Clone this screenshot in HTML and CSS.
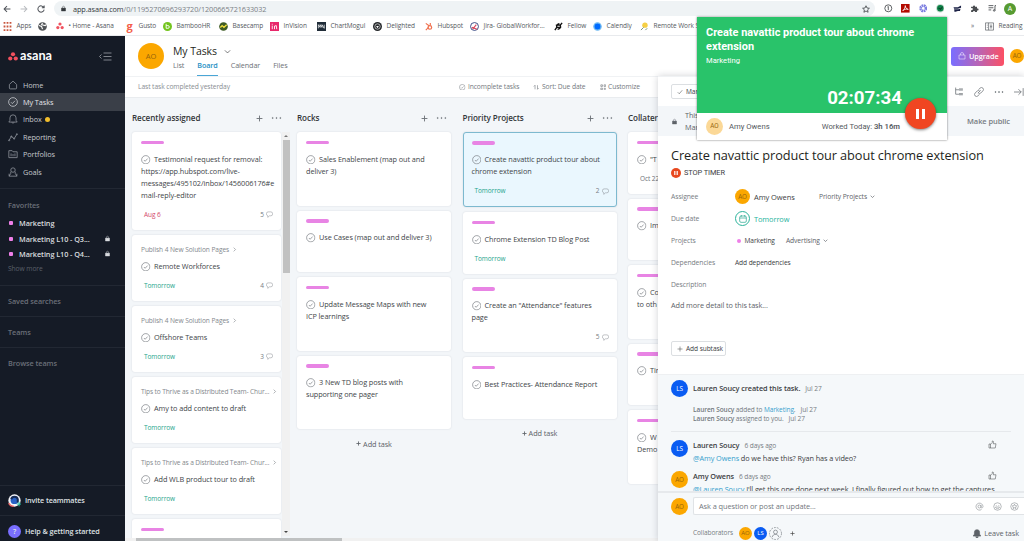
FILE: index.html
```html
<!DOCTYPE html>
<html lang="en">
<head>
    <meta charset="UTF-8">
    <meta name="viewport" content="width=device-width, initial-scale=1.0">
    <title>My Tasks - Asana</title>
    <link rel="stylesheet" href="styles.css">
</head>
<body>
    <!-- shared icons -->
    <svg class="sprite">
        <symbol id="check" viewBox="0 0 20 20"><circle cx="10" cy="10" r="8.7"/><path d="M6 10.5l2.7 2.7L14 7.5"/></symbol>
        <symbol id="comment" viewBox="0 0 16 16"><path d="M5 2h6a4 4 0 0 1 4 4v1a4 4 0 0 1-4 4H8l-4 3.500v-3.700A4 4 0 0 1 1 7V6a4 4 0 0 1 4-4z"/></symbol>
        <symbol id="down" viewBox="0 0 12 12"><path d="M1.500 4L6 8.500 10.500 4"/></symbol>
        <symbol id="right" viewBox="0 0 12 12"><path d="M4 1.500L8.500 6 4 10.500"/></symbol>
        <symbol id="plus" viewBox="0 0 12 12"><path d="M6 1v10M1 6h10"/></symbol>
        <symbol id="dots" viewBox="0 0 20 6"><circle cx="3" cy="3" r="1"/><circle cx="10" cy="3" r="1"/><circle cx="17" cy="3" r="1"/></symbol>
        <symbol id="lock" viewBox="0 0 12 14"><path d="M1 6h10v7H1z" fill="currentColor"/><path d="M3.500 6V4a2.500 2.500 0 0 1 5 0v2"/></symbol>
        <symbol id="thumb" viewBox="0 0 18 18"><path d="M2 8h3v8H2zM5 8.500L8.500 5V2c2-.5 3 1 2.500 3l-.5 2.500H16L14.500 16H5"/></symbol>
    </svg>

    <div class="browser">
        <div class="address-row">
            <svg class="nav" viewBox="0 0 14 14"><path d="M13 7H2M7 2L2 7l5 5"/></svg>
            <svg class="nav faded" viewBox="0 0 14 14"><path d="M1 7h11M7 2l5 5-5 5"/></svg>
            <svg class="nav" viewBox="0 0 14 14"><path d="M12 4.500A5.500 5.500 0 1 0 12.500 8M12.500 1v4h-4"/></svg>
            <div class="address">
                <svg class="lock-icon"><use href="#lock"/></svg>
                <span>app.asana.com<span class="path">/0/1195270696293720/1200665721633032</span></span>
                <svg class="star" viewBox="0 0 16 16"><path d="M8 1.500l2 4.500 4.800.5-3.600 3.200 1 4.800L8 12l-4.200 2.500 1-4.800L1.200 6.500 6 6z"/></svg>
            </div>
            <div class="extensions">
                <svg viewBox="0 0 16 16"><circle cx="8" cy="8" r="6.500"/><path d="M8 4.500v7M6.500 5.500L8 4.500"/></svg>
                <svg viewBox="0 0 16 16"><path d="M0 0h16v16H0z" fill="#b30b00" stroke="none"/><path d="M3 13c4-4 5-7 5-10 0 4 2 6 5.500 7-4-1-7 0-10 2" stroke="#fff"/></svg>
                <svg viewBox="0 0 16 16"><circle cx="8" cy="8" r="5" stroke="#7d7fe0" stroke-width="5" stroke-dasharray="3 1"/></svg>
                <svg viewBox="0 0 16 16"><circle cx="8" cy="8" r="8" fill="#c9dcd1" stroke="none"/><circle cx="8" cy="8" r="6" fill="#0b8046" stroke="none"/><path d="M4.500 7l3 3 4.500-4" stroke="#111"/></svg>
                <svg viewBox="0 0 16 16"><path d="M1 6h8l6-3v4L9 9H2zM2 10h8l4-1-1 4H9l-6 2z" fill="#1d2347" stroke="none"/></svg>
                <svg viewBox="0 0 16 16"><path d="M2 5h3.500a2 2 0 1 1 4 0H13v3.500a2 2 0 1 1 0 3.500v3H9.500a2 2 0 1 0-4 0H2v-4a2 2 0 1 0 0-3z" fill="#4a4d50" stroke="none"/></svg>
                <svg viewBox="0 0 16 16"><path d="M1 3h9M1 7h9M1 11h5M13 12V3h3"/><circle cx="11.500" cy="12" r="1.500"/></svg>
                <span class="profile">A</span>
            </div>
        </div>
        <div class="bookmarks">
            <span class="bm"><svg viewBox="0 0 9 9"><path d="M1.500 0v9M4.500 0v9M7.500 0v9" stroke="#c8553d" stroke-width="1.800" stroke-dasharray="1.800 1.800"/></svg>Apps</span>
            <span class="bm"><svg viewBox="0 0 10 10"><circle cx="5" cy="5" r="4.800" fill="#505357"/><path d="M1 4l3 1 1 3M5 1l-1 2 4 1 1-1" stroke="#fff" stroke-width="1.200" fill="none"/></svg></span>
            <span class="bm"><svg class="asana-bm" viewBox="0 0 10 10"><circle cx="5" cy="2.500" r="2"/><circle cx="2.300" cy="7" r="2"/><circle cx="7.700" cy="7" r="2"/></svg>• Home - Asana</span>
            <span class="bm"><b class="gusto">g</b>Gusto</span>
            <span class="bm"><svg viewBox="0 0 10 10"><circle cx="5" cy="5" r="5" fill="#73c41d"/><path d="M3.500 2v5h2a1.300 1.300 0 0 0 0-3h-2" stroke="#fff"/></svg>BambooHR</span>
            <span class="bm"><svg viewBox="0 0 10 10"><circle cx="5" cy="5" r="4.800" fill="#3e5b25"/><path d="M1.500 6l2-2 2 2 3-3" stroke="#f5e23d" stroke-width="1.500"/></svg>Basecamp</span>
            <span class="bm"><svg viewBox="0 0 10 10"><path d="M0 0h10v10H0z" fill="#e8286b"/><path d="M2.500 4v4M5 8V4.500l2-.5.500 4M2.500 2v1" stroke="#fff"/></svg>InVision</span>
            <span class="bm"><svg viewBox="0 0 10 10"><path d="M0 0h10v10H0z" fill="#202c38"/><path d="M1.500 7V3l2 3V3l2 3V3L8 7V3" stroke="#fff" stroke-width=".8"/></svg>ChartMogul</span>
            <span class="bm"><svg viewBox="0 0 10 10"><circle cx="5" cy="5" r="5" fill="#26282b"/><circle cx="5" cy="5" r="3" stroke="#ddd" stroke-width=".8"/><path d="M3.500 4.500h3L5 7z" fill="#fff"/></svg>Delighted</span>
            <span class="bm"><svg viewBox="0 0 10 10"><path d="M2 1.500l4 3M7 1v3M2 9l3-3" stroke="#f0714f" stroke-width="1.300"/><circle cx="6.500" cy="6" r="2" stroke="#f0714f" stroke-width="1.400"/></svg>Hubspot</span>
            <span class="bm"><svg viewBox="0 0 10 10"><circle cx="5" cy="5" r="4.400" stroke="#2d407d"/><path d="M3 8l4-5M2 6l6 2" stroke="#d8495d" stroke-width="1.300"/></svg>Jira- GlobalWorkfor...</span>
            <span class="bm"><svg viewBox="0 0 10 10"><path d="M2 3.500h5L9 1M8 6H3L1 9M7 3.500C8 6 6 8 4 8M3 6c-.5-3 2-4 3-4" stroke="#111" stroke-width="1.600"/></svg>Fellow</span>
            <span class="bm"><svg viewBox="0 0 10 10"><circle cx="5" cy="5" r="4" fill="#006bff" stroke="#6fb9f2" stroke-width="1.500"/></svg>Calendly</span>
            <span class="bm"><svg viewBox="0 0 10 10"><circle cx="5.500" cy="3.500" r="3" fill="#f5cf45"/><path d="M1 9l3-3M6 9l2-2" stroke="#6a8a70"/></svg>Remote Work S</span>
            <span class="bm more">»</span>
            <span class="bm"><svg viewBox="0 0 10 10"><path d="M.500 1h9v8h-9zM4 1v8M5.500 3.500H8M5.500 5H8M5.500 6.500H8M2 3.500h1M2 6h1" stroke="#5f6368" stroke-width=".8"/></svg>Reading list</span>
        </div>
    </div>

    <div class="app">
        <div class="sidebar">
            <div class="brand">
                <svg class="asana-dots" viewBox="0 0 20 18"><circle cx="10" cy="4.500" r="4.200"/><circle cx="4.500" cy="13" r="4.200"/><circle cx="15.500" cy="13" r="4.200"/></svg>
                <span class="wordmark">asana</span>
                <svg class="collapse" viewBox="0 0 26 18"><path d="M9 2h16M9 9h16M9 16h16M5 5L1 9l4 4"/></svg>
            </div>
            <div class="nav-item"><svg viewBox="0 0 18 18"><path d="M2.500 8L9 2l6.500 6v6.500a1.500 1.500 0 0 1-1.500 1.500H4a1.500 1.500 0 0 1-1.500-1.500z"/></svg>Home</div>
            <div class="nav-item active"><svg><use href="#check"/></svg>My Tasks</div>
            <div class="nav-item"><svg viewBox="0 0 18 18"><path d="M1.500 14.500l2-3V7a5.500 5.500 0 0 1 11 0v4.500l2 3zM7 15c.5 2 3.500 2 4 0"/></svg>Inbox<i class="unread"></i></div>
            <div class="nav-item"><svg viewBox="0 0 18 18"><path d="M2 15l4-7 5 4 5-8"/><circle cx="2" cy="15" r="1"/><circle cx="6" cy="8" r="1"/><circle cx="11" cy="12" r="1"/><circle cx="16" cy="4" r="1"/></svg>Reporting</div>
            <div class="nav-item"><svg viewBox="0 0 18 18"><path d="M1.500 3h6l1.500 2h7.500v10.500h-15zM5.500 8v5M9 9v4M12.500 8v5"/></svg>Portfolios</div>
            <div class="nav-item"><svg viewBox="0 0 18 18"><circle cx="9" cy="5.500" r="4"/><path d="M5 8.500v3L2 16.500h14l-3-5v-3M2 12v4.500M16 12v4.500"/></svg>Goals</div>

            <div class="favorites">
                <h4>Favorites</h4>
                <div class="fav"><i></i>Marketing</div>
                <div class="fav"><i></i>Marketing L10 - Q3...<svg><use href="#lock"/></svg></div>
                <div class="fav"><i></i>Marketing L10 - Q4...<svg><use href="#lock"/></svg></div>
                <div class="show-more">Show more</div>
            </div>
            <h4 class="section">Saved searches</h4>
            <h4 class="section">Teams</h4>
            <h4 class="section">Browse teams</h4>

            <div class="sidebar-foot">
                <div class="foot-item"><svg viewBox="0 0 20 20"><circle cx="10" cy="10" r="9.500" fill="#f4f4f8"/><circle cx="10" cy="9.500" r="6" fill="#2861c4"/><path d="M5 8c1-5 9-5 10 0v5" stroke="#172b55" stroke-width="3" fill="none"/><path d="M1 14a9 9 0 0 0 8 5" stroke="#f06a6a" stroke-width="2" fill="none"/><path d="M17 12v7M13.500 15.500h7" stroke="#25c2a0" stroke-width="1.500"/></svg>Invite teammates</div>
                <div class="foot-item"><span class="help">?</span>Help &amp; getting started</div>
            </div>
        </div>

        <div class="main">
            <div class="header">
                <span class="avatar big">AO</span>
                <div class="titles">
                    <h1>My Tasks <svg><use href="#down"/></svg></h1>
                    <div class="tabs">
                        <span>List</span>
                        <span class="current">Board</span>
                        <span>Calendar</span>
                        <span>Files</span>
                    </div>
                </div>
                <div class="upgrade"><svg viewBox="0 0 16 16"><path d="M2 6h12v8H2zM5 6V4a3 3 0 0 1 6 0v2"/></svg>Upgrade</div>
                <span class="avatar me">AO</span>
            </div>

            <div class="content">
                <div class="board-area">
                    <div class="toolbar">
                        <span class="last">Last task completed yesterday</span>
                        <span class="tool"><svg><use href="#check"/></svg>Incomplete tasks</span>
                        <span class="tool"><svg viewBox="0 0 16 16"><path d="M5 13V3L2 6M11 3v10l3-3"/></svg>Sort: Due date</span>
                        <span class="tool"><svg viewBox="0 0 16 16"><path d="M2 2h4v4H2zM10 2h4v4h-4zM2 10h4v4H2zM12 9v6M9 12h6"/></svg>Customize</span>
                    </div>
                    <div class="board">
                        <div class="column scrolls">
                            <div class="col-head"><h3>Recently assigned</h3><svg class="plus"><use href="#plus"/></svg><svg class="dots"><use href="#dots"/></svg></div>
                            <div class="col-body">
                                <div class="cards">
                                    <div class="card">
                                        <i class="tag"></i>
                                        <p><svg><use href="#check"/></svg>Testimonial request for removal:<br>https://app.hubspot.com/live-<br>messages/495102/inbox/1456006176#e<br>mail-reply-editor</p>
                                        <div class="meta"><span class="late">Aug 6</span><span class="count">5<svg><use href="#comment"/></svg></span></div>
                                    </div>
                                    <div class="card">
                                        <div class="parent">Publish 4 New Solution Pages<svg><use href="#right"/></svg></div>
                                        <p><svg><use href="#check"/></svg>Remote Workforces</p>
                                        <div class="meta"><span>Tomorrow</span><span class="count">4<svg><use href="#comment"/></svg></span></div>
                                    </div>
                                    <div class="card">
                                        <div class="parent">Publish 4 New Solution Pages<svg><use href="#right"/></svg></div>
                                        <p><svg><use href="#check"/></svg>Offshore Teams</p>
                                        <div class="meta"><span>Tomorrow</span><span class="count">3<svg><use href="#comment"/></svg></span></div>
                                    </div>
                                    <div class="card">
                                        <div class="parent full">Tips to Thrive as a Distributed Team- Chur...<svg><use href="#right"/></svg></div>
                                        <p><svg><use href="#check"/></svg>Amy to add content to draft</p>
                                        <div class="meta"><span>Tomorrow</span></div>
                                    </div>
                                    <div class="card">
                                        <div class="parent full">Tips to Thrive as a Distributed Team- Chur...<svg><use href="#right"/></svg></div>
                                        <p><svg><use href="#check"/></svg>Add WLB product tour to draft</p>
                                        <div class="meta"><span>Tomorrow</span></div>
                                    </div>
                                    <div class="card last-card"><i class="tag"></i></div>
                                </div>
                                <div class="scrollbar"><b class="up"></b><div class="thumb"></div><b class="dn"></b></div>
                            </div>
                        </div>

                        <div class="column">
                            <div class="col-head"><h3>Rocks</h3><svg class="plus"><use href="#plus"/></svg><svg class="dots"><use href="#dots"/></svg></div>
                            <div class="cards">
                                <div class="card"><i class="tag"></i><p><svg><use href="#check"/></svg>Sales Enablement (map out and<br>deliver 3)</p><div class="meta"></div></div>
                                <div class="card"><i class="tag"></i><p><svg><use href="#check"/></svg>Use Cases (map out and deliver 3)</p><div class="meta"></div></div>
                                <div class="card"><i class="tag"></i><p><svg><use href="#check"/></svg>Update Message Maps with new<br>ICP learnings</p><div class="meta"></div></div>
                                <div class="card"><i class="tag"></i><p><svg><use href="#check"/></svg>3 New TD blog posts with<br>supporting one pager</p><div class="meta"></div></div>
                            </div>
                            <div class="add-task"><svg><use href="#plus"/></svg>Add task</div>
                        </div>

                        <div class="column">
                            <div class="col-head"><h3>Priority Projects</h3><svg class="plus"><use href="#plus"/></svg><svg class="dots"><use href="#dots"/></svg></div>
                            <div class="cards">
                                <div class="card selected"><i class="tag"></i><p><svg><use href="#check"/></svg>Create navattic product tour about<br>chrome extension</p><div class="meta"><span>Tomorrow</span><span class="count">2<svg><use href="#comment"/></svg></span></div></div>
                                <div class="card"><i class="tag"></i><p><svg><use href="#check"/></svg>Chrome Extension TD Blog Post</p><div class="meta"><span>Tomorrow</span></div></div>
                                <div class="card"><i class="tag"></i><p><svg><use href="#check"/></svg>Create an "Attendance" features<br>page</p><div class="meta"><span class="count">5<svg><use href="#comment"/></svg></span></div></div>
                                <div class="card"><i class="tag"></i><p><svg><use href="#check"/></svg>Best Practices- Attendance Report</p><div class="meta"></div></div>
                            </div>
                            <div class="add-task"><svg><use href="#plus"/></svg>Add task</div>
                        </div>

                        <div class="column">
                            <div class="col-head"><h3>Collateral</h3></div>
                            <div class="cards">
                                <div class="card"><i class="tag"></i><p><svg><use href="#check"/></svg>"T</p><div class="meta"><span class="plain">Oct 22</span></div></div>
                                <div class="card"><i class="tag"></i><p><svg><use href="#check"/></svg>Im</p><div class="meta"></div></div>
                                <div class="card"><i class="tag"></i><p><svg><use href="#check"/></svg>Co<br>to oth</p><div class="meta"></div></div>
                                <div class="card"><i class="tag"></i><p><svg><use href="#check"/></svg>Tir</p><div class="meta"></div></div>
                                <div class="card"><i class="tag"></i><p><svg><use href="#check"/></svg>W<br>Demo</p><div class="meta"></div></div>
                            </div>
                        </div>
                    </div>
                    <div class="hscroll"><div></div></div>
                </div>

                <div class="pane">
                    <div class="pane-bar">
                        <span class="mark"><svg viewBox="0 0 12 12"><path d="M1.500 6.500l3 3 6-7"/></svg>Mark complete</span>
                        <span class="pane-icons">
                            <svg viewBox="0 0 18 18"><path d="M3 1v12h6M3 5h6M9 3.500h7M9 5.500h7M9 12h7M9 14h7"/></svg>
                            <svg viewBox="0 0 18 18"><path d="M7 11l5-5M8 5l3-3a3.500 3.500 0 0 1 5 5l-4 4a3 3 0 0 1-4 0M10 13l-3 3a3.500 3.500 0 0 1-5-5l4-4a3 3 0 0 1 4 0"/></svg>
                            <svg class="fat" viewBox="0 0 20 6"><use href="#dots"/></svg>
                            <svg viewBox="0 0 18 18"><path d="M0 9h13M8 4l5 5-5 5M16.500 2v14"/></svg>
                        </span>
                    </div>
                    <div class="privacy">
                        <svg><use href="#lock"/></svg>
                        <p>This task<br>Mark</p>
                        <b>Make public</b>
                    </div>
                    <div class="details">
                        <h2>Create navattic product tour about chrome extension</h2>
                        <div class="stop"><svg viewBox="0 0 10 10"><circle cx="5" cy="5" r="5" fill="#e8491f"/><path d="M3.800 3v4M6.200 3v4" stroke="#fff" stroke-width="1.200"/></svg>STOP TIMER</div>
                        <div class="field"><label>Assignee</label><span class="avatar small">AO</span><span class="person">Amy Owens</span><span class="drop">Priority Projects<svg><use href="#down"/></svg></span></div>
                        <div class="field"><label>Due date</label><span class="cal"><svg viewBox="0 0 12 12"><rect x="1" y="1.500" width="10" height="9.500" rx="2"/><path d="M1 4.500h10M3.500 0v2.500M8.500 0v2.500"/></svg></span><span class="due">Tomorrow</span></div>
                        <div class="field"><label>Projects</label><i class="pink"></i><span class="proj">Marketing</span><span class="drop2">Advertising<svg><use href="#down"/></svg></span></div>
                        <div class="field"><label>Dependencies</label><span class="dep">Add dependencies</span></div>
                        <div class="field"><label>Description</label></div>
                        <div class="placeholder">Add more detail to this task...</div>
                        <span class="subtask"><svg><use href="#plus"/></svg>Add subtask</span>
                    </div>
                    <div class="activity">
                        <div class="story">
                            <span class="avatar blue">LS</span>
                            <div class="story-text"><b>Lauren Soucy created this task.</b><time>Jul 27</time></div>
                        </div>
                        <div class="log">
                            <div><b>Lauren Soucy</b> added to <a>Marketing</a>.<time>Jul 27</time></div>
                            <div><b>Lauren Soucy</b> assigned to you.<time>Jul 27</time></div>
                        </div>
                        <div class="story reply">
                            <span class="avatar blue">LS</span>
                            <div class="story-text"><b>Lauren Soucy</b><time>6 days ago</time><p><a>@Amy Owens</a> do we have this? Ryan has a video?</p></div>
                            <svg><use href="#thumb"/></svg>
                        </div>
                        <div class="story reply">
                            <span class="avatar">AO</span>
                            <div class="story-text"><b>Amy Owens</b><time>6 days ago</time><p><a>@Lauren Soucy</a> I'll get this one done next week. I finally figured out how to get the captures</p></div>
                            <svg><use href="#thumb"/></svg>
                        </div>
                    </div>
                    <div class="composer">
                        <div class="ask-row">
                            <span class="avatar">AO</span>
                            <div class="ask">
                                <span>Ask a question or post an update...</span>
                                <svg viewBox="0 0 18 18"><circle cx="9" cy="9" r="3"/><path d="M12 6v4.500c0 2 4 2 4-1.500a7 7 0 1 0-3 6"/></svg>
                                <svg viewBox="0 0 18 18"><circle cx="9" cy="9" r="7.500"/><path d="M5 10c1 4.500 7 4.500 8 0zM6.500 6v1.500M11.500 6v1.500"/></svg>
                                <svg viewBox="0 0 18 18"><circle cx="9" cy="9" r="7.500"/><path d="M9 4.500l1.400 3 3.200.3-2.400 2.200.7 3.200L9 11.500l-2.900 1.700.7-3.200-2.400-2.200 3.200-.3z"/></svg>
                            </div>
                        </div>
                        <div class="collab">
                            <span class="label">Collaborators</span>
                            <span class="avatar mini">AO</span>
                            <span class="avatar mini blue">LS</span>
                            <svg class="ghost" viewBox="0 0 18 18"><circle cx="9" cy="9" r="8.300" stroke-dasharray="2.500 1.500"/><circle cx="9" cy="7" r="2.700"/><path d="M4.500 14c.5-5 8.500-5 9 0"/></svg>
                            <svg class="plus"><use href="#plus"/></svg>
                            <span class="leave"><svg viewBox="0 0 12 14"><path d="M6 1a4 4 0 0 1 4 4v3l2 3H0l2-3V5a4 4 0 0 1 4-4zM4 12h4c0 2-4 2-4 0z"/></svg>Leave task</span>
                        </div>
                    </div>
                </div>
            </div>
        </div>
    </div>

    <!-- time tracking popup over the page -->
    <div class="timer">
        <div class="timer-top">
            <h2>Create navattic product tour about chrome extension</h2>
            <div class="timer-project">Marketing</div>
            <div class="clock">02:07:34</div>
        </div>
        <div class="timer-foot">
            <span class="avatar pale">AO</span>
            <span>Amy Owens</span>
            <span class="worked">Worked Today: <b>3h 16m</b></span>
        </div>
        <div class="pause"><i></i><i></i></div>
    </div>
</body>
</html>
```

FILE: styles.css
```css
* {
    box-sizing: border-box;
}

body {
    margin: 0;
    width: 1024px;
    height: 541px;
    overflow: hidden;
    position: relative;
    background: #fff;
    color: #3c4043;
    font-family: "Open Sans", "Noto Sans", sans-serif;
    font-size: 7.3px;
    line-height: 12px;
    letter-spacing: -0.08px;
    white-space: nowrap;
}

h1, h2, h3, h4, p {
    margin: 0;
    font-size: inherit;
    font-weight: normal;
}

svg {
    display: block;
    flex: none;
    fill: none;
    stroke: currentColor;
}

b {
    font-weight: 600;
}

.sprite {
    display: none;
}

/* browser chrome */
.browser {
    height: 36px;
    border-bottom: 1px solid #e8eaed;
}

.address-row {
    display: flex;
    align-items: center;
    height: 17px;
    padding-left: 3px;
}

.nav {
    width: 8px;
    height: 8px;
    margin-right: 9px;
    stroke-width: 1.8;
    color: #50545a;
}

.faded {
    color: #b9bcc0;
}

.address {
    display: flex;
    align-items: center;
    width: 821px;
    height: 15px;
    padding: 0 5px 0 7px;
    border-radius: 8px;
    background: #eff3f5;
    color: #33373b;
    font-size: 7.3px;
}

.address .path {
    color: #7b8085;
}

.lock-icon {
    width: 5px;
    height: 7px;
    margin-right: 7px;
}

.star {
    width: 8px;
    height: 8px;
    margin-left: auto;
    stroke-width: 1.5;
}

.extensions {
    display: flex;
    align-items: center;
    gap: 8.700px;
    margin-left: 9px;
}

.extensions svg {
    width: 8.6px;
    height: 8.6px;
    stroke-width: 1.5;
}

.profile {
    width: 12px;
    height: 12px;
    margin-left: -1px;
    border-radius: 50%;
    background: #579b32;
    color: #fff;
    text-align: center;
    font-size: 7px;
}

.bookmarks {
    display: grid;
    grid-template-columns: 35px 18px 69px 38px 56px 51px 47px 56px 51px 46px 84px 39px 47px 331px 14px auto;
    height: 18px;
    padding-left: 3px;
    align-items: center;
    font-size: 6.5px;
    color: #55595e;
}

.bm {
    display: flex;
    align-items: center;
    gap: 4.500px;
}

.bm svg {
    width: 9px;
    height: 9px;
    stroke: none;
}

.bm .asana-bm {
    width: 8px;
    height: 8px;
    fill: #f0525f;
}

.gusto {
    width: 9px;
    text-align: center;
    color: #f45d48;
    font-size: 11px;
    font-weight: 700;
}

/* layout */
.app {
    display: flex;
    height: 505px;
}

.sidebar {
    display: flex;
    flex-direction: column;
    width: 125px;
    background: #151b26;
    color: #c6c9ce;
}

.brand {
    display: flex;
    align-items: center;
    height: 40px;
    padding-left: 8px;
}

.asana-dots {
    width: 10px;
    height: 9px;
    fill: #f2505e;
    stroke: none;
}

.wordmark {
    margin: -2px 0 0 2px;
    color: #fff;
    font-family: Lato, sans-serif;
    font-size: 12.700px;
    font-weight: 700;
    letter-spacing: 0;
}

.collapse {
    width: 13px;
    height: 9px;
    margin-left: auto;
    margin-right: 13px;
    color: #9ca0a7;
    stroke-width: 1.6;
}

.nav-item {
    display: flex;
    align-items: center;
    height: 17.4px;
    padding-left: 8px;
    gap: 5px;
}

.nav-item svg {
    width: 10px;
    height: 10px;
    color: #8a8f98;
    stroke-width: 1.5;
}

.active {
    background: #3a3f48;
    color: #e3e5e8;
}

.active svg {
    color: #d0d3d8;
}

.unread {
    width: 5px;
    height: 5px;
    margin-left: -2px;
    border-radius: 50%;
    background: #f1bd2c;
}

.sidebar h4 {
    color: #6a6f78;
    font-weight: 600;
}

.favorites {
    height: 97px;
    margin-top: 8px;
    padding: 17px 0 0 8px;
    border-top: 1px solid #222833;
}

.fav {
    display: flex;
    align-items: center;
    width: 102px;
    height: 15.200px;
    font-weight: 600;
    color: #d9dbdf;
}

.sidebar .favorites h4 {
    margin: -7px 0 4.500px;
    height: 12px;
    line-height: 12px;
}

.fav i, .pink {
    width: 4px;
    height: 4px;
    margin: 0 6px 0 1px;
    border-radius: 1px;
    background: #ee7fe8;
}

.fav svg {
    width: 5px;
    height: 7px;
    margin-left: auto;
}

.show-more {
    font-size: 6.7px;
    color: #5b606a;
    line-height: 16px;
}

.section {
    height: 31px;
    padding-left: 8px;
    border-top: 1px solid #222833;
    line-height: 31px;
}

.sidebar-foot {
    margin-top: auto;
}

.foot-item {
    display: flex;
    align-items: center;
    height: 30.500px;
    padding-left: 8px;
    gap: 4px;
    border-top: 1px solid #222833;
    color: #dfe1e4;
    font-weight: 600;
    font-size: 7.2px;
}

.sidebar-foot .foot-item:last-child {
    height: 26px;
    padding-top: 5px;
}

.foot-item svg, .help {
    width: 13px;
    height: 13px;
    stroke: none;
}

.help {
    border-radius: 50%;
    background: #796eff;
    text-align: center;
}

.main {
    width: 899px;
}

.header {
    display: flex;
    align-items: center;
    height: 40px;
    padding-left: 13px;
}

.avatar {
    flex: none;
    width: 17px;
    height: 17px;
    border-radius: 50%;
    background: #fba700;
    color: #96650c;
    text-align: center;
    line-height: 17px;
    font-size: 6.3px;
}

.avatar.blue {
    background: #0a5cf2;
    color: #fff;
}

.avatar.big {
    width: 26px;
    height: 26px;
    line-height: 26px;
    font-size: 7.500px;
}

.titles {
    margin-left: 9px;
    align-self: flex-end;
}

h1 {
    display: flex;
    align-items: center;
    color: #1e1f21;
    font-size: 10.500px;
    font-weight: 500;
    line-height: 15px;
    height: 16px;
}

h1 svg {
    width: 7px;
    height: 7px;
    margin-left: 7px;
}

.tabs {
    display: flex;
    gap: 13px;
    height: 17px;
    font-size: 7.2px;
    line-height: 13px;
    font-weight: 500;
    color: #6d7278;
}

.current {
    border-bottom: 1.500px solid #4aa6d6;
    color: #258fc4;
    font-weight: 600;
}

.upgrade {
    display: flex;
    align-items: center;
    gap: 3px;
    width: 53px;
    height: 19px;
    margin-left: auto;
    padding-left: 7px;
    border-radius: 3px;
    background: linear-gradient(90deg, #796eff, #b665b8 50%, #fc5064);
    color: #fff;
    font-weight: 600;
}

.upgrade svg {
    width: 8px;
    height: 8px;
}

.me {
    width: 14px;
    height: 14px;
    line-height: 14px;
    margin: 0 0 0 6px;
}

.content {
    display: flex;
    height: 465px;
}

.board-area {
    width: 533px;
    overflow: hidden;
    background: #f3f6f9;
}

.toolbar {
    display: flex;
    align-items: center;
    height: 22px;
    padding: 0 18px 0 13px;
    border-top: 1px solid #f0f2f4;
    border-bottom: 1px solid #e9ecef;
    background: #fff;
    gap: 14px;
    color: #73787e;
    font-size: 6.700px;
    font-weight: 500;
}

.last {
    margin-right: auto;
    font-weight: 400;
    color: #888d92;
}

.tool {
    display: flex;
    align-items: center;
    gap: 2px;
}

.tool svg {
    width: 6.500px;
    height: 6.500px;
    stroke-width: 1.5;
}

/* board */
.board {
    display: flex;
    gap: 11.500px;
    height: 440px;
    padding: 0 0 0 7px;
    overflow: hidden;
}

.column {
    flex: none;
    width: 154px;
}

.scrolls {
    width: 158px;
    margin-right: -4.500px;
}

.col-head {
    display: flex;
    align-items: center;
    height: 34px;
    padding-top: 6px;
}

.col-head h3 {
    margin-right: auto;
    color: #33363a;
    font-size: 8.100px;
    font-weight: 600;
}

.plus {
    width: 7px;
    height: 7px;
    color: #6d7278;
    stroke-width: 1.600;
}

.dots {
    width: 11px;
    height: 4px;
    margin: 0 4px 0 8px;
    fill: currentColor;
    color: #6d7278;
}

.scrolls .dots {
    margin-right: 8px;
}

.col-body {
    display: flex;
}

.cards {
    display: flex;
    flex-direction: column;
    gap: 5px;
}

.scrolls .cards {
    width: 149px;
    gap: 5.500px;
}

.card {
    flex: none;
    padding: 8.500px 9px 9px;
    border-radius: 3px;
    background: #fff;
    box-shadow: 0 0 2px rgba(21, 27, 38, .13);
}

.card.selected {
    padding: 8px 8px 9px;
    border: 1px solid #7db9cf;
    background: #eaf7fe;
}

.card.last-card {
    height: 24px;
}

.tag {
    display: block;
    width: 23px;
    height: 3.500px;
    margin-bottom: 8.500px;
    border-radius: 2px;
    background: #e884e4;
}

.card p {
    color: #414549;
}

.card p svg {
    display: inline-block;
    width: 9.500px;
    height: 9.500px;
    margin-right: 3.500px;
    color: #7a7f84;
    stroke-width: 1.5;
    vertical-align: -2.500px;
    margin-top: -1px;
}

.parent {
    display: flex;
    align-items: center;
    gap: 3px;
    margin: 0 0 4px;
    color: #83888d;
    font-size: 6.600px;
}

.parent svg {
    width: 5px;
    height: 5px;
    stroke-width: 1.5;
}

.parent.full {
    letter-spacing: -0.13px;
}

.parent.full svg {
    margin-left: auto;
    margin-right: -1px;
}

.meta {
    display: flex;
    height: 12px;
    margin-top: 8px;
    padding-left: 3px;
    color: #1ea58c;
    font-size: 6.500px;
}

.late {
    color: #d3486a;
}

.plain {
    color: #6d7278;
}

.count {
    display: flex;
    align-items: center;
    gap: 2px;
    margin-left: auto;
    margin-right: -1px;
    color: #777c82;
}

.count svg {
    width: 7px;
    height: 7px;
}

.scrollbar {
    display: flex;
    flex-direction: column;
    align-items: center;
    width: 8px;
    height: 404px;
    margin-left: 1px;
    background: #f1f1f1;
}

.scrollbar .thumb {
    width: 7px;
    height: 133px;
    margin-bottom: auto;
    background: #c1c1c1;
}

.up, .dn {
    border: 2px solid transparent;
}

.up {
    margin: 1px 0 3px;
    border-bottom-color: #777;
}

.dn {
    margin-bottom: 1px;
    border-top-color: #444;
}

.add-task {
    display: flex;
    align-items: center;
    justify-content: center;
    gap: 2px;
    height: 29px;
    color: #5d6268;
    font-weight: 500;
}

.add-task svg {
    width: 5px;
    height: 5px;
    stroke-width: 2;
}

.hscroll {
    height: 3px;
    padding-left: 11px;
    background: #f1f1f1;
}

.hscroll div {
    width: 206px;
    height: 3px;
    background: #bfc1c2;
}

/* task pane */
.pane {
    display: flex;
    flex-direction: column;
    width: 366px;
    background: #fff;
    box-shadow: 0 0 7px rgba(21, 27, 38, .2);
    overflow: hidden;
}

.pane-bar {
    display: flex;
    align-items: center;
    height: 30px;
    padding-left: 13px;
    border-top: 1px solid #f0f2f4;
}

.mark, .subtask {
    display: flex;
    align-items: center;
    gap: 3px;
    width: 65px;
    height: 15px;
    padding-left: 5px;
    border: 1px solid #dcdfe2;
    border-radius: 2px;
    font-size: 6.600px;
}

.mark svg, .subtask svg {
    width: 6px;
    height: 6px;
}

.pane-icons {
    display: flex;
    align-items: center;
    gap: 10px;
    margin-left: auto;
    color: #6d7278;
}

.pane-icons svg {
    width: 10px;
    height: 10px;
    stroke-width: 1.400;
}

.pane-icons .fat {
    height: 4px;
    fill: currentColor;
}

.privacy {
    display: flex;
    align-items: center;
    height: 30px;
    padding: 0 14px 0 14px;
    background: #f3f6f9;
    color: #5d6268;
}

.privacy svg {
    width: 5px;
    height: 7px;
    margin-right: 8px;
}

.privacy b {
    margin-left: auto;
    color: #777c82;
    font-size: 7.500px;
}

.details {
    height: 238px;
    padding: 11px 13px 0;
}

.details h2 {
    color: #1e1f21;
    font-size: 12.750px;
    line-height: 16px;
}

.stop {
    display: flex;
    align-items: center;
    gap: 3px;
    height: 20px;
    margin-bottom: 3px;
    font-family: Roboto, sans-serif;
    font-size: 7.400px;
}

.stop svg {
    width: 10px;
    height: 10px;
    stroke: none;
}

.field {
    display: flex;
    align-items: center;
    height: 21.900px;
}

.field label {
    width: 64px;
    color: #777c82;
    font-size: 6.800px;
}

.avatar.small {
    width: 15px;
    height: 15px;
    line-height: 15px;
}

.person {
    width: 69px;
    padding-left: 4px;
    font-size: 7.500px;
}

.drop, .drop2 {
    display: flex;
    align-items: center;
    gap: 3px;
    color: #5d6268;
    font-size: 6.700px;
}

.drop svg, .drop2 svg {
    width: 5px;
    height: 5px;
    stroke-width: 1.6;
}

.cal {
    display: flex;
    align-items: center;
    justify-content: center;
    width: 15px;
    height: 15px;
    border: 1px solid #2cb39b;
    border-radius: 50%;
    color: #1ea58c;
}

.cal svg {
    width: 8px;
    height: 8px;
}

.due {
    padding-left: 4px;
    color: #25b39c;
    font-size: 7.400px;
}

.pink {
    margin: 0 3.500px 0 2px;
    border-radius: 50%;
}

.proj, .dep {
    font-size: 6.600px;
}

.drop2 {
    margin-left: 11px;
}

.placeholder {
    height: 42px;
    line-height: 21px;
    color: #5d6268;
}

.subtask {
    width: 55px;
    margin-top: 4px;
}

.activity {
    flex: 1;
    overflow: hidden;
    padding: 5px 13px 0;
    border-top: 1px solid #eef0f2;
    background: #f5f8fa;
}

.story {
    display: flex;
    align-items: center;
}

.story-text {
    width: 300px;
    padding-left: 5px;
    color: #3c4043;
}

time {
    margin-left: 5px;
    color: #777c82;
    font-size: 6.600px;
}

a {
    color: #35a0cd;
}

.log {
    margin-left: 22px;
    padding-top: 7.500px;
    height: 34px;
    color: #73787e;
    font-size: 6.500px;
    line-height: 9px;
}

.reply {
    align-items: flex-start;
    height: 31.500px;
    padding-top: 4px;
}

.log + .reply {
    border-top: 1px solid #e6e9ec;
    height: 36px;
    padding-top: 8px;
}

.reply .story-text {
    margin-top: -1px;
}

.reply > svg {
    width: 9px;
    height: 9px;
}

.composer {
    height: 50px;
    padding: 4px 0 0 13px;
    border-top: 2px solid #e6e9ec;
    background: #f5f8fa;
}

.ask-row {
    display: flex;
    align-items: center;
    gap: 5px;
}

.ask {
    display: flex;
    align-items: center;
    flex: 1;
    height: 18px;
    padding-left: 5px;
    border: 1px solid #e0e3e6;
    border-right: 0;
    border-radius: 2px 0 0 2px;
    background: #fff;
    color: #73787e;
    font-size: 7.400px;
}

.ask span {
    margin-right: auto;
}

.ask svg {
    width: 9px;
    height: 9px;
    margin-right: 8.500px;
}

.ask svg:last-child {
    margin-right: 5px;
}

.collab {
    display: flex;
    align-items: center;
    gap: 2px;
    height: 14px;
    margin-top: 11px;
    padding-left: 22px;
    color: #777c82;
    font-size: 6.500px;
}

.label {
    width: 44px;
}

.avatar.mini {
    width: 13px;
    height: 13px;
    line-height: 13px;
    font-size: 6px;
}

.ghost {
    width: 13px;
    height: 13px;
}

.collab .plus {
    width: 5px;
    height: 5px;
    margin-left: 6px;
    color: #444;
}

.leave {
    display: flex;
    align-items: center;
    gap: 3px;
    margin: 0 5px 0 auto;
    color: #5d6268;
    font-size: 7.300px;
}

.leave svg {
    width: 8px;
    height: 9px;
    fill: currentColor;
}

/* timer popup */
.timer {
    position: absolute;
    left: 697px;
    top: 17px;
    width: 250px;
    height: 123px;
    background: #fff;
    box-shadow: 0 0 2px rgba(0, 0, 0, .55);
    font-family: Roboto, sans-serif;
    letter-spacing: 0;
}

.timer-top {
    height: 96px;
    padding: 9px 9px 0;
    background: #29c36a;
    color: #fff;
}

.timer h2 {
    width: 220px;
    font-size: 10.950px;
    font-weight: 700;
    line-height: 14px;
    white-space: normal;
}

.timer-project {
    font-size: 7.600px;
    line-height: 14px;
}

.clock {
    margin: 19px 36px 0 0;
    text-align: right;
    font-size: 18.700px;
    line-height: 22px;
    font-weight: 700;
}

.timer-foot {
    display: flex;
    align-items: center;
    gap: 6px;
    height: 27px;
    padding-left: 9px;
    font-size: 7.700px;
    color: #55595e;
}

.avatar.pale {
    background: #fbd897;
}

.worked {
    margin: 0 47px 0 auto;
}

.pause {
    position: absolute;
    right: 11px;
    top: 81px;
    display: flex;
    align-items: center;
    justify-content: center;
    gap: 3px;
    width: 31px;
    height: 31px;
    border-radius: 50%;
    background: #f04622;
    box-shadow: 0 1px 3px rgba(0, 0, 0, .5);
}

.pause i {
    width: 3px;
    height: 10px;
    background: #fff;
}
```
